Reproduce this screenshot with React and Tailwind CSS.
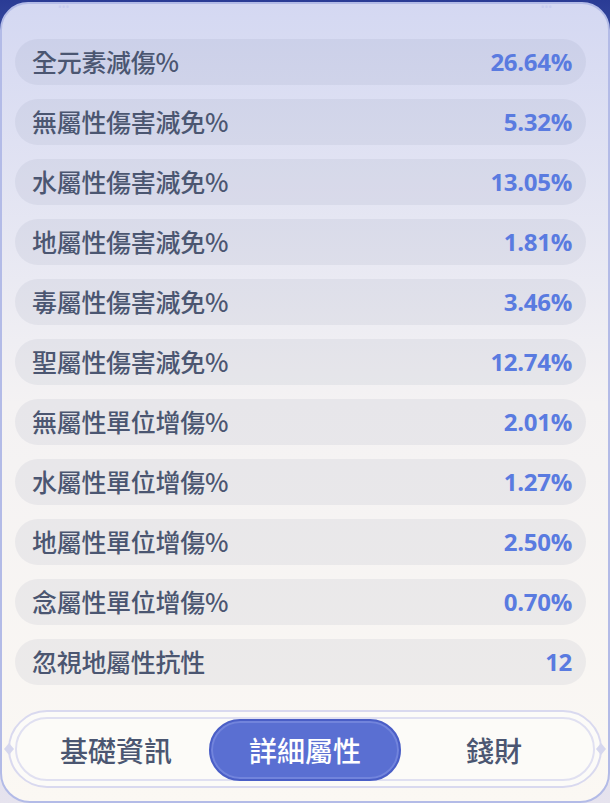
import React, { useState } from "react";

const stats = [
  { label: "全元素減傷%", value: "26.64%" },
  { label: "無屬性傷害減免%", value: "5.32%" },
  { label: "水屬性傷害減免%", value: "13.05%" },
  { label: "地屬性傷害減免%", value: "1.81%" },
  { label: "毒屬性傷害減免%", value: "3.46%" },
  { label: "聖屬性傷害減免%", value: "12.74%" },
  { label: "無屬性單位增傷%", value: "2.01%" },
  { label: "水屬性單位增傷%", value: "1.27%" },
  { label: "地屬性單位增傷%", value: "2.50%" },
  { label: "念屬性單位增傷%", value: "0.70%" },
  { label: "忽視地屬性抗性", value: "12" },
];

const tabs = ["基礎資訊", "詳細屬性", "錢財"];

const cjk = { fontFamily: '"Noto Sans CJK TC", "Noto Sans CJK SC", sans-serif' };
const num = { fontFamily: '"Open Sans", "Noto Sans", sans-serif' };

function Diamond({ className }) {
  return (
    <svg className={className} width="14" height="14" viewBox="0 0 14 14">
      <path d="M7 1 L12 7 L7 13 L2 7 Z" fill="#d6d7ee" />
    </svg>
  );
}

function StatRow({ label, value }) {
  return (
    <div className="flex items-center justify-between h-[46px] rounded-full bg-[#4a4f7e]/[0.07] pl-[17px] pr-[14px]">
      <span className="text-[25px] font-medium text-[#4b5671] tracking-[-0.3px]" style={cjk}>
        {label}
      </span>
      <span className="text-[24px] font-bold text-[#5a7be0] tracking-[-0.3px]" style={num}>
        {value}
      </span>
    </div>
  );
}

export default function App() {
  const [active, setActive] = useState(1);

  return (
    <div className="w-[610px] h-[803px] overflow-hidden bg-gradient-to-b from-[#2a3b95] via-[#cfd2ea] to-[#e6e3ee]">
      <div className="relative h-[801px] mt-[2px] rounded-t-[28px] rounded-b-[30px] border-2 border-[#b3bbe7] bg-gradient-to-b from-[#d4d8f2] via-[#f4f2f3] via-50% to-[#fbf8f3] flex flex-col">
        <div className="absolute left-[56px] top-[-2px] text-[#c8cdef] text-[10px] leading-none">•••</div>
        <div className="absolute right-[56px] top-[-2px] text-[#c8cdef] text-[10px] leading-none">•••</div>

        <div className="flex flex-col gap-[14px] pl-[13px] pr-[22px] pt-[35px]">
          {stats.map((s) => (
            <StatRow key={s.label} label={s.label} value={s.value} />
          ))}
        </div>

        <div className="relative ml-[6px] mr-[6px] mt-[25px] h-[78px] rounded-full border-2 border-[#d9d9ef] bg-[#fcfbf8] p-[5px]">
          <Diamond className="absolute left-[-8px] top-[30px]" />
          <Diamond className="absolute right-[-8px] top-[30px]" />
          <div className="h-full rounded-full border-2 border-[#e0e0f1] grid grid-cols-[1fr_192px_1fr] items-center px-[6px]">
            {tabs.map((t, i) => (
              <button
                key={t}
                onClick={() => setActive(i)}
                className={`h-[62px] rounded-full text-[28px] font-medium flex items-center justify-center ${
                  i === active
                    ? "bg-[#5a6fd2] text-white border-2 border-[#4a5ec6] shadow-[inset_0_0_0_2px_#7284dc]"
                    : "text-[#4b5671]"
                }`}
                style={cjk}
              >
                {t}
              </button>
            ))}
          </div>
        </div>
      </div>
    </div>
  );
}
